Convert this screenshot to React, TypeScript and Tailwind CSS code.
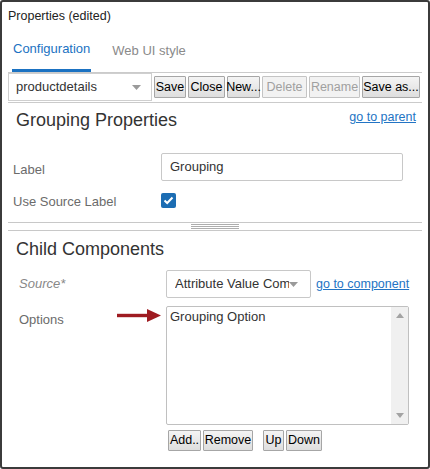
const font = { fontFamily: '"Liberation Sans", Arial, sans-serif' };

function Btn({
  label,
  w,
  disabled,
  h = "h-[22px]",
}: {
  label: string;
  w: string;
  disabled?: boolean;
  h?: string;
}) {
  return (
    <button
      className={`${w} ${h} shrink-0 flex items-center justify-center border rounded-[1px] text-[12.5px] leading-none ${
        disabled
          ? "border-[#c4c4c4] bg-[#f2f2f2] text-[#a0a0a0]"
          : "border-[#a6a6a6] bg-gradient-to-b from-[#f4f4f4] to-[#dedede] text-black"
      }`}
    >
      {label}
    </button>
  );
}

function Caret() {
  return (
    <svg width="9" height="5" viewBox="0 0 9 5" className="shrink-0">
      <polygon points="0,0 9,0 4.5,5" fill="#9a9a9a" />
    </svg>
  );
}

export default function App() {
  return (
    <div
      className="relative w-[430px] h-[469px] bg-white border-2 border-[#3b3b3b] rounded-[3px] overflow-hidden"
      style={font}
    >
      <div className="px-[6px]">
        {/* title */}
        <div className="mt-[6px] h-[16px] text-[12.5px] leading-[16px] text-[#222]">
          Properties (edited)
        </div>

        {/* tabs */}
        <div className="h-[49px] flex border-b border-[#cbcbcb]">
          <div className="ml-[4px] h-[48px] px-[1px] pt-[5px] flex items-center border-b-[3px] border-[#1b72c2] text-[13px] text-[#1b72c2]">
            Configuration
          </div>
          <div className="ml-[20px] h-[48px] px-[1px] pt-[5px] flex items-center text-[13px] text-[#8a8a8a]">
            Web UI style
          </div>
        </div>

        {/* toolbar */}
        <div className="h-[30px] flex items-start border-b border-[#cbcbcb]">
          <div className="w-[144px] h-[28px] flex items-center justify-between border border-[#cfcfcf] pl-[7px] pr-[10px] text-[13px] text-[#333]">
            <span>productdetails</span>
            <Caret />
          </div>
          <div className="ml-[2px] mt-[3px] flex gap-[2px]">
            <Btn label="Save" w="w-[32px]" />
            <Btn label="Close" w="w-[37px]" />
            <Btn label="New..." w="w-[33px]" />
            <Btn label="Delete" w="w-[45px]" disabled />
            <Btn label="Rename" w="w-[51px]" disabled />
            <Btn label="Save as..." w="w-[58px]" />
          </div>
        </div>

        {/* grouping properties */}
        <div className="mt-[6px] flex items-start justify-between pr-[6px]">
          <div className="pl-[8px] text-[18px] leading-[22px] text-[#333]">
            Grouping Properties
          </div>
          <a className="text-[12.5px] leading-[16px] text-[#2374c4] underline">
            go to parent
          </a>
        </div>

        <div className="mt-[22px] flex items-center">
          <div className="w-[153px] pl-[5px] pt-[6px] text-[13px] leading-[16px] text-[#6b6b6b]">
            Label
          </div>
          <div className="w-[242px] h-[28px] flex items-center border border-[#c8c8c8] rounded-[2px] pl-[8px] text-[13px] text-[#333]">
            Grouping
          </div>
        </div>

        <div className="mt-[12px] flex items-start">
          <div className="w-[153px] pl-[5px] mt-[1px] text-[13px] leading-[16px] text-[#6b6b6b]">
            Use Source Label
          </div>
          <div className="w-[15px] h-[15px] rounded-[2px] bg-[#1c6db3] flex items-center justify-center">
            <svg width="11" height="9" viewBox="0 0 11 9">
              <path
                d="M1.5 4.5 L4.2 7 L9.5 1.5"
                fill="none"
                stroke="white"
                strokeWidth="2"
              />
            </svg>
          </div>
        </div>

        {/* splitter */}
        <div className="mt-[12px] h-[9px] border-t border-b border-[#c8c8c8] flex items-center justify-center">
          <div className="w-[48px] flex flex-col gap-[1px]">
            <div className="h-px bg-[#adadad]" />
            <div className="h-px bg-[#adadad]" />
            <div className="h-px bg-[#adadad]" />
          </div>
        </div>

        {/* child components */}
        <div className="mt-[7px] pl-[8px] text-[18px] leading-[22px] text-[#333]">
          Child Components
        </div>

        <div className="mt-[10px] flex items-center">
          <div className="w-[158px] pl-[11px] text-[13px] leading-[16px] italic text-[#888]">
            Source*
          </div>
          <div className="w-[145px] h-[28px] flex items-center border border-[#c8c8c8] rounded-[2px] pl-[8px] pr-[12px] text-[13px] text-[#333]">
            <span className="w-[117px] overflow-hidden whitespace-nowrap">
              Attribute Value Comp
            </span>
            <Caret />
          </div>
          <a className="ml-[5px] text-[12.5px] leading-[16px] text-[#2374c4] underline">
            go to component
          </a>
        </div>

        <div className="mt-[8px] flex items-start">
          <div className="w-[158px] pl-[11px] mt-[6px] text-[13px] leading-[16px] text-[#6b6b6b]">
            Options
          </div>
          <div className="w-[243px] h-[119px] flex border border-[#c0c0c0] rounded-[2px]">
            <div className="flex-1 pl-[3px] pt-[2px] text-[13px] leading-[16px] text-[#333]">
              Grouping Option
            </div>
            <div className="w-[17px] bg-[#f0f0f0] flex flex-col items-center justify-between py-[6px]">
              <svg width="8" height="5" viewBox="0 0 8 5">
                <polygon points="0,5 8,5 4,0" fill="#a3a3a3" />
              </svg>
              <svg width="8" height="5" viewBox="0 0 8 5">
                <polygon points="0,0 8,0 4,5" fill="#a3a3a3" />
              </svg>
            </div>
          </div>
        </div>

        <div className="mt-[5px] ml-[160px] flex">
          <Btn label="Add.." w="w-[33px]" h="h-[21px]" />
          <div className="ml-[2px]">
            <Btn label="Remove" w="w-[50px]" h="h-[21px]" />
          </div>
          <div className="ml-[10px]">
            <Btn label="Up" w="w-[21px]" h="h-[21px]" />
          </div>
          <div className="ml-[2px]">
            <Btn label="Down" w="w-[36px]" h="h-[21px]" />
          </div>
        </div>
      </div>

      {/* annotation arrow */}
      <svg
        className="absolute left-[115px] top-[307px]"
        width="44"
        height="13"
        viewBox="0 0 44 13"
      >
        <rect x="0" y="4.8" width="32" height="3.4" fill="#9e1b21" />
        <polygon points="30,0 44,6.5 30,13" fill="#9e1b21" />
      </svg>
    </div>
  );
}
